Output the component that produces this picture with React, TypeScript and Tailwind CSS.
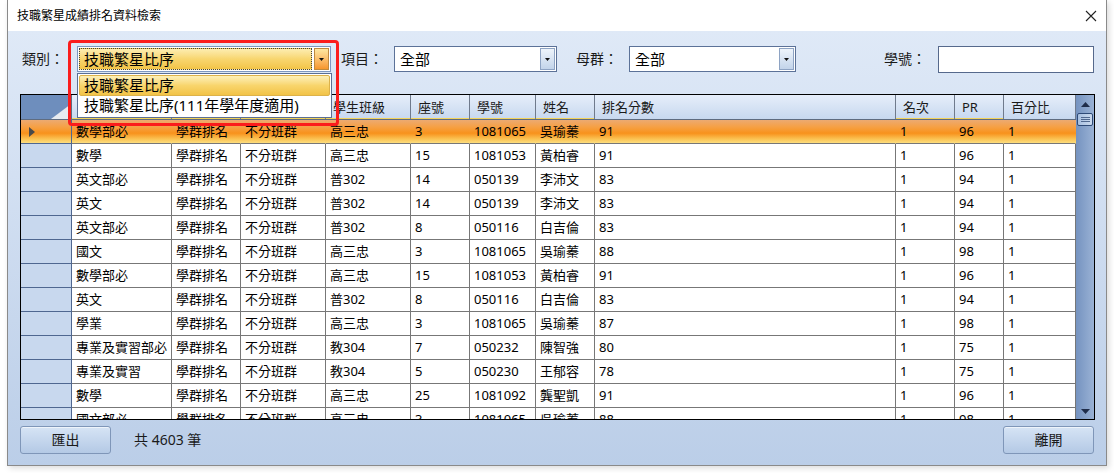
import React from "react";

const font = "font-['Noto_Sans','Noto_Sans_CJK_TC',sans-serif]";

// column settings: width includes the right grid line
const columns = [
  { title: "科目", w: "w-[100px]", mark: true },
  { title: "排名類型", w: "w-[69px]", mark: true },
  { title: "班群", w: "w-[85px]", mark: true },
  { title: "學生班級", w: "w-[85px]", mark: true },
  { title: "座號", w: "w-[59px]", mark: true },
  { title: "學號", w: "w-[66px]", mark: true },
  { title: "姓名", w: "w-[59px]", mark: true },
  { title: "排名分數", w: "w-[301px]", mark: false },
  { title: "名次", w: "w-[59px]", mark: true },
  { title: "PR", w: "w-[49px]", mark: true },
  { title: "百分比", w: "w-[72px]", mark: false },
];

const rows = [
  ["數學部必", "學群排名", "不分班群", "高三忠", "3", "1081065", "吳瑜蓁", "91", "1", "96", "1"],
  ["數學", "學群排名", "不分班群", "高三忠", "15", "1081053", "黃柏睿", "91", "1", "96", "1"],
  ["英文部必", "學群排名", "不分班群", "普302", "14", "050139", "李沛文", "83", "1", "94", "1"],
  ["英文", "學群排名", "不分班群", "普302", "14", "050139", "李沛文", "83", "1", "94", "1"],
  ["英文部必", "學群排名", "不分班群", "普302", "8", "050116", "白吉倫", "83", "1", "94", "1"],
  ["國文", "學群排名", "不分班群", "高三忠", "3", "1081065", "吳瑜蓁", "88", "1", "98", "1"],
  ["數學部必", "學群排名", "不分班群", "高三忠", "15", "1081053", "黃柏睿", "91", "1", "96", "1"],
  ["英文", "學群排名", "不分班群", "普302", "8", "050116", "白吉倫", "83", "1", "94", "1"],
  ["學業", "學群排名", "不分班群", "高三忠", "3", "1081065", "吳瑜蓁", "87", "1", "98", "1"],
  ["專業及實習部必", "學群排名", "不分班群", "教304", "7", "050232", "陳智強", "80", "1", "75", "1"],
  ["專業及實習", "學群排名", "不分班群", "教304", "5", "050230", "王郁容", "78", "1", "75", "1"],
  ["數學", "學群排名", "不分班群", "高三忠", "25", "1081092", "龔聖凱", "91", "1", "96", "1"],
  ["國文部必", "學群排名", "不分班群", "高三忠", "3", "1081065", "吳瑜蓁", "88", "1", "98", "1"],
];

const Arrow = ({ up = false }: { up?: boolean }) => (
  <svg width="9" height="5" viewBox="0 0 9 5">
    <polygon points={up ? "0,5 9,5 4.5,0" : "0,0 9,0 4.5,5"} fill="#1f2d4a" />
  </svg>
);

const SmallDown = () => (
  <svg width="5" height="3" viewBox="0 0 5 3">
    <polygon points="0,0 5,0 2.5,3" fill="#111" />
  </svg>
);

const Combo = ({ width, value }: { width: string; value: string }) => (
  <div className={`${width} h-[26px] border border-[#5c7298] bg-white flex items-stretch p-[1px]`}>
    <div className="flex-1 flex items-center pl-[4px] text-[15px] leading-none text-black">{value}</div>
    <div className="w-[15px] border border-[#8ea3c3] bg-linear-to-b from-[#eef4fb] to-[#c3d4ea] flex items-center justify-center">
      <SmallDown />
    </div>
  </div>
);

const Button = ({ label }: { label: string }) => (
  <div className="w-[91px] h-[28px] rounded-[3px] border border-[#7f96b8] bg-linear-to-b from-[#d6e4f5] to-[#b4c9e5] flex items-center justify-center text-[14px] leading-none text-[#1a1a1a] shadow-[inset_0_1px_0_rgba(255,255,255,0.6)]">
    {label}
  </div>
);

export default function App() {
  return (
    <div className={`w-[1114px] h-[473px] bg-white overflow-hidden pl-[7px] ${font}`}>
      <div className="w-[1100px] h-[466px] border-x border-b border-[#8a8a8a] flex flex-col shadow-[2px_2px_6px_rgba(0,0,0,0.15)]">
        {/* title bar */}
        <div className="h-[31px] bg-white flex items-center justify-between pl-[9px] pr-[9px] shrink-0">
          <span className="text-[12px] leading-none text-black">技職繁星成績排名資料檢索</span>
          <svg width="12" height="12" viewBox="0 0 12 12">
            <path d="M1 1L11 11M11 1L1 11" stroke="#222" strokeWidth="1.1" />
          </svg>
        </div>

        {/* body */}
        <div className="relative flex-1 bg-linear-to-b from-[#dfe9f7] to-[#bbcee8] flex flex-col">
          {/* filter row */}
          <div className="mt-[14px] h-[28px] flex items-center pl-[14px] shrink-0">
            <div className="w-[55px] text-[14px] leading-none text-[#1a1a1a]">類別：</div>
            <div className="w-[254px] h-[26px] border border-[#7d97c0] bg-white flex items-stretch p-[1px] gap-[2px]">
              <div className="flex-1 flex items-center px-[4px] text-[15px] leading-none text-black border border-dotted border-[#444] bg-linear-to-b from-[#fdedb0] via-[#f8d66f] to-[#f2c447]">
                技職繁星比序
              </div>
              <div className="w-[15px] border border-[#c08a3e] bg-linear-to-b from-[#fde7a0] to-[#f6962a] flex items-center justify-center">
                <SmallDown />
              </div>
            </div>
            <div className="ml-[10px] w-[53px] text-[14px] leading-none text-[#1a1a1a]">項目：</div>
            <Combo width="w-[163px]" value="全部" />
            <div className="ml-[19px] w-[53px] text-[14px] leading-none text-[#1a1a1a]">母群：</div>
            <Combo width="w-[167px]" value="全部" />
            <div className="ml-[88px] w-[54px] text-[14px] leading-none text-[#1a1a1a]">學號：</div>
            <div className="w-[156px] h-[27px] border border-[#56698c] bg-white" />
          </div>

          {/* grid */}
          <div className="mt-[21px] ml-[12px] w-[1075px] h-[326px] border border-black flex shrink-0 overflow-hidden bg-white">
            <div className="w-[1055px] flex flex-col">
              {/* header */}
              <div className="h-[25px] flex shrink-0 bg-linear-to-b from-[#e6eefa] to-[#c7d8ef] border-b border-[#5f6c80]">
                <div className="w-[51px] border-r border-[#5f6c80] bg-[#6e8ebd] relative">
                  <svg className="absolute right-0 bottom-0" width="20" height="15" viewBox="0 0 20 15">
                    <polygon points="0,15 20,15 20,0" fill="#e7ebf1" />
                  </svg>
                </div>
                {columns.map((c) => (
                  <div
                    key={c.title}
                    className={`${c.w} shrink-0 border-r border-[#6f7a8c] pl-[7px] flex items-center text-[13px] leading-none text-[#1a1a1a] relative`}
                  >
                    {c.title}
                    {c.mark && <div className="absolute left-0 right-0 bottom-0 h-[1px] bg-[#f3d35a]" />}
                  </div>
                ))}
              </div>

              {rows.map((r, i) => {
                const sel = i === 0;
                return (
                  <div
                    key={i}
                    className={`h-[24px] flex shrink-0 ${sel ? "bg-[linear-gradient(to_bottom,#ecaa72_0%,#f6a043_30%,#f8921c_55%,#fbc455_80%,#fde48a_100%)]" : "bg-white"}`}
                  >
                    <div
                      className={`w-[51px] shrink-0 border-r border-b border-[#4f6790] flex items-center pl-[8px] ${sel ? "" : "bg-[#c8d8ee]"}`}
                    >
                      {sel && (
                        <svg width="6" height="10" viewBox="0 0 6 10">
                          <polygon points="0,0 6,5 0,10" fill="#4a4a4a" />
                        </svg>
                      )}
                    </div>
                    {r.map((v, j) => (
                      <div
                        key={j}
                        className={`${columns[j].w} shrink-0 border-b border-r border-[#777777] ${sel ? "border-r-transparent" : ""} pl-[4px] flex items-center text-[13px] leading-none text-black whitespace-nowrap overflow-hidden`}
                      >
                        {v}
                      </div>
                    ))}
                  </div>
                );
              })}
            </div>

            {/* scrollbar */}
            <div className="w-[18px] flex flex-col bg-linear-to-r from-[#7593c0] to-[#9ab2d5]">
              <div className="h-[18px] flex items-center justify-center">
                <Arrow up />
              </div>
              <div className="h-[13px] mx-[1px] rounded-[2px] border border-[#2f4b78] bg-linear-to-r from-[#a7bfe0] to-[#cbdaee] flex flex-col items-center justify-center gap-[1px]">
                <div className="w-[9px] h-[1px] bg-[#50688f]" />
                <div className="w-[9px] h-[1px] bg-[#50688f]" />
                <div className="w-[9px] h-[1px] bg-[#50688f]" />
              </div>
              <div className="flex-1" />
              <div className="h-[16px] flex items-center justify-center">
                <Arrow />
              </div>
            </div>
          </div>

          {/* footer */}
          <div className="mt-[6px] h-[28px] flex items-center justify-between pl-[12px] pr-[12px] shrink-0">
            <div className="flex items-center">
              <Button label="匯出" />
              <span className="ml-[23px] text-[14px] leading-none text-[#1a1a1a]">共 4603 筆</span>
            </div>
            <Button label="離開" />
          </div>

          {/* open dropdown list of 類別 */}
          <div className="absolute left-[69px] top-[42px] w-[255px] h-[45px] bg-white border border-[#5a6f94] p-[1px] flex flex-col">
            <div className="h-[21px] rounded-[2px] border border-[#dcb24a] bg-linear-to-b from-[#fdf0b8] via-[#f8d56c] to-[#f2c346] flex items-center pl-[4px] text-[15px] leading-none text-black">
              技職繁星比序
            </div>
            <div className="h-[21px] flex items-center pl-[5px] text-[15px] leading-none text-black">
              技職繁星比序(111年學年度適用)
            </div>
          </div>

          {/* red highlight */}
          <div className="absolute left-[60px] top-[9px] w-[271px] h-[86px] border-[3px] border-[#fb1c1c] rounded-[4px]" />
        </div>
      </div>
    </div>
  );
}
